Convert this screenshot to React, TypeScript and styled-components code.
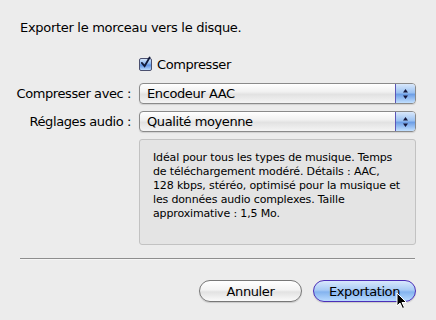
import React from "react";
import styled, { createGlobalStyle } from "styled-components";

const GlobalStyle = createGlobalStyle`
  html, body {
    margin: 0;
    padding: 0;
    background: #ececec;
  }
  body {
    font-family: "Lucida Grande", "DejaVu Sans", sans-serif;
    color: #000;
  }
`;

const Dialog = styled.div`
  position: relative;
  width: 436px;
  height: 320px;
  overflow: hidden;
  background: #ececec;
  padding-top: 20px;
  box-sizing: border-box;
`;

const Title = styled.div`
  margin-left: 20px;
  font-size: 13px;
  line-height: 16px;
  letter-spacing: -0.3px;
`;

const Form = styled.div`
  display: grid;
  grid-template-columns: 131px 277px;
  column-gap: 8px;
  row-gap: 7px;
  margin-top: 20px;
  align-items: center;
`;

const CheckRow = styled.label`
  grid-column: 2;
  display: flex;
  align-items: center;
  gap: 5px;
  height: 16px;
  margin-bottom: 4px;
  font-size: 13px;
  letter-spacing: -0.4px;
`;

const CheckBox = styled.span`
  width: 13px;
  height: 13px;
  box-sizing: border-box;
  border: 1px solid #4a4f6e;
  border-radius: 2px;
  background: linear-gradient(#d5e6fb 0%, #86b2ee 45%, #5d91e2 55%, #b8d8fb 100%);
  display: flex;
  align-items: center;
  justify-content: center;
`;

const Label = styled.div`
  text-align: right;
  font-size: 13px;
  letter-spacing: -0.4px;
  white-space: nowrap;
`;

const Popup = styled.div`
  height: 21px;
  box-sizing: border-box;
  border: 1px solid #8a8a8a;
  border-radius: 4px;
  background: linear-gradient(#ffffff 0%, #f1f1f1 40%, #e2e2e2 55%, #f4f4f4 100%);
  display: flex;
  align-items: center;
  box-shadow: 0 1px 1px rgba(0, 0, 0, 0.12);
  overflow: hidden;
`;

const PopupText = styled.span`
  flex: 1;
  padding-left: 7px;
  font-size: 13px;
  letter-spacing: -0.4px;
`;

const Stepper = styled.span`
  width: 19px;
  height: 100%;
  border-left: 1px solid #5c56b8;
  background: linear-gradient(#d9e8fb 0%, #9cc2f2 45%, #6e9fe6 55%, #c2e0ff 100%);
  display: flex;
  align-items: center;
  justify-content: center;
`;

const InfoBox = styled.div`
  grid-column: 2;
  height: 106px;
  box-sizing: border-box;
  border: 1px solid #c2c2c2;
  border-radius: 3px;
  background: #e4e4e4;
  padding: 11px 0 0 13px;
  font-size: 11px;
  line-height: 14px;
  letter-spacing: -0.15px;
`;

const InfoLine = styled.span`
  display: block;
  white-space: nowrap;
`;

const Separator = styled.div`
  margin: 13px 0 0 20px;
  width: 395px;
  height: 1px;
  background: #8e8e8e;
  border-bottom: 1px solid #f6f6f6;
`;

const Buttons = styled.div`
  display: flex;
  justify-content: flex-end;
  gap: 11px;
  margin-top: 20px;
  padding-right: 20px;
`;

const Button = styled.button<{ $primary?: boolean }>`
  width: 103px;
  height: 22px;
  box-sizing: border-box;
  border-radius: 11px;
  border: 1px solid ${(p) => (p.$primary ? "#4b2fb8" : "#777")};
  background: ${(p) =>
    p.$primary
      ? "linear-gradient(#d8e8fc 0%, #a9cbf5 45%, #84b3ef 55%, #b9dbff 100%)"
      : "linear-gradient(#ffffff 0%, #f3f3f3 45%, #e2e2e2 55%, #fafafa 100%)"};
  font-family: inherit;
  font-size: 13px;
  letter-spacing: -0.4px;
  color: #000;
  padding: 0;
  box-shadow: 0 1px 1px rgba(0, 0, 0, 0.15);
`;

const Cursor = styled.svg`
  position: absolute;
  left: 396px;
  top: 292px;
`;

const Arrows = () => (
  <svg width="9" height="14" viewBox="0 0 9 14">
    <path d="M4.5 2 L7 5.5 L2 5.5 Z" fill="#15163a" />
    <path d="M4.5 12 L7 8.5 L2 8.5 Z" fill="#15163a" />
  </svg>
);

const Select = ({ value }: { value: string }) => (
  <Popup>
    <PopupText>{value}</PopupText>
    <Stepper>
      <Arrows />
    </Stepper>
  </Popup>
);

const lines = [
  "Idéal pour tous les types de musique. Temps",
  "de téléchargement modéré. Détails : AAC,",
  "128 kbps, stéréo, optimisé pour la musique et",
  "les données audio complexes. Taille",
  "approximative : 1,5 Mo.",
];

const App = () => {
  return (
    <Dialog>
      <GlobalStyle />
      <Title>Exporter le morceau vers le disque.</Title>
      <Form>
        <CheckRow>
          <CheckBox>
            <svg width="12" height="13" viewBox="0 0 12 13" style={{ marginTop: -3 }}>
              <path
                d="M2 7 L5 10.5 L10.5 1"
                stroke="#111a3a"
                strokeWidth="2"
                fill="none"
                strokeLinecap="round"
              />
            </svg>
          </CheckBox>
          Compresser
        </CheckRow>
        <Label>Compresser avec :</Label>
        <Select value="Encodeur AAC" />
        <Label>Réglages audio :</Label>
        <Select value="Qualité moyenne" />
        <InfoBox>
          {lines.map((l) => (
            <InfoLine key={l}>{l}</InfoLine>
          ))}
        </InfoBox>
      </Form>
      <Separator />
      <Buttons>
        <Button>Annuler</Button>
        <Button $primary>Exportation</Button>
      </Buttons>
      <Cursor width="12" height="18" viewBox="0 0 12 18">
        <path
          d="M1 1 L1 14 L4 11 L6.5 16.5 L8.5 15.5 L6 10.5 L10.5 10.5 Z"
          fill="#000"
          stroke="#fff"
          strokeWidth="1"
          strokeLinejoin="round"
        />
      </Cursor>
    </Dialog>
  );
};

export default App;
